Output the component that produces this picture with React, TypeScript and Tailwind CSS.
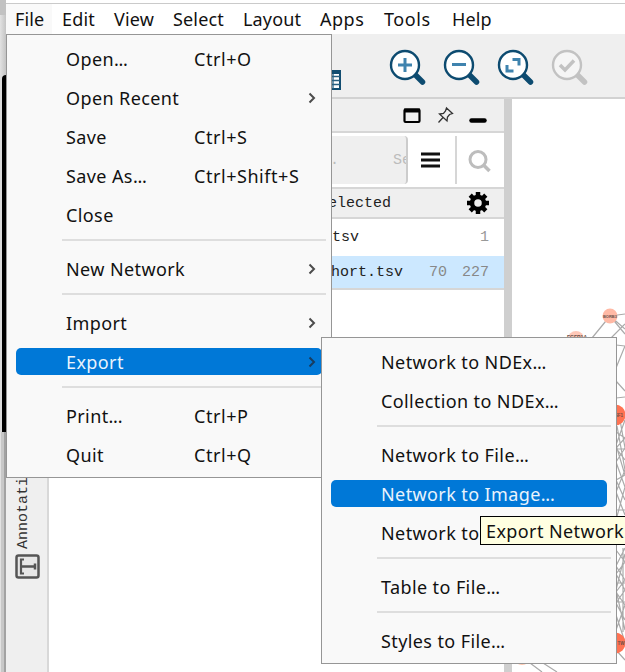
import React from 'react';

type Entry = { label?: string; dots?: boolean; keys?: string; arrow?: boolean; active?: boolean };

const fileMenu: Entry[] = [
  { label: 'Open', dots: true, keys: 'Ctrl+O' },
  { label: 'Open Recent', arrow: true },
  { label: 'Save', keys: 'Ctrl+S' },
  { label: 'Save As', dots: true, keys: 'Ctrl+Shift+S' },
  { label: 'Close' },
  {},
  { label: 'New Network', arrow: true },
  {},
  { label: 'Import', arrow: true },
  { label: 'Export', arrow: true, active: true },
  {},
  { label: 'Print', dots: true, keys: 'Ctrl+P' },
  { label: 'Quit', keys: 'Ctrl+Q' },
];

const exportMenu: Entry[] = [
  { label: 'Network to NDEx', dots: true },
  { label: 'Collection to NDEx', dots: true },
  {},
  { label: 'Network to File', dots: true },
  { label: 'Network to Image', dots: true, active: true },
  { label: 'Network to' },
  {},
  { label: 'Table to File', dots: true },
  {},
  { label: 'Styles to File', dots: true },
];

function MenuList({ items }: { items: Entry[] }) {
  return (
    <>
      {items.map((it, i) =>
        !it.label ? (
          <div key={i} className="h-[15px] pl-[55px] pr-[5px] pt-[5px]">
            <div className="h-[2px] bg-[#dedede]" />
          </div>
        ) : (
          <div key={i} className="flex h-[39px] items-center pl-[9px] pr-[9px]">
            <div className={`flex h-[27px] w-full items-center rounded-[5px] pl-[50px] tracking-[0.4px] ${it.active ? 'bg-[#0078d7] text-[#e9f3fc]' : ''}`}>
              <span className={it.keys ? 'w-32 shrink-0' : 'grow'}>
                {it.label}
                {it.dots && <span className="tracking-[-0.3px]">...</span>}
              </span>
              {it.keys && <span className="tracking-[0.55px]">{it.keys}</span>}
              {it.arrow && (
                <svg width="8" height="12" viewBox="0 0 8 12" className="mr-[6px]" fill="none" stroke={it.active ? '#173d60' : '#4c4c4c'} strokeWidth="2">
                  <path d="M1.5 1.5L6 6L1.5 10.5" />
                </svg>
              )}
            </div>
          </div>
        ),
      )}
    </>
  );
}

function Lens({ color, mark, children }: { color: string; mark: string; children: React.ReactNode }) {
  return (
    <svg width="38" height="38" viewBox="0 0 38 38" fill="none">
      <path d="M26 25.5L33.500 33" stroke={color} strokeWidth="5.5" strokeLinecap="round" />
      <circle cx="16" cy="16" r="14" fill={mark === '#c2c2c2' ? '#f5f5f5' : '#fff'} stroke={color} strokeWidth="2.4" />
      <g stroke={mark} strokeWidth="3">{children}</g>
    </svg>
  );
}

function Network() {
  return (
    <svg width="113" height="573" viewBox="512 99 113 573" fill="none" className="block">
      <g stroke="#aaa" strokeWidth="1.2">
        <path d="M610 316L592 338M610 316L625 334M610 316L625 329M610 316L625 314M625 324L611 338M616 345L625 346M616 368L625 346M616 381L625 391M616 398L625 397M616 449H625M616 510H625" />
        <path d="M617 426L625 470L616 492L625 515M620 420L625 448L616 462L625 487L616 520M616 432L625 438L616 448L625 460M625 420L616 445L625 475L616 480L625 500M616 550L625 562L616 574L625 590L616 603L625 620M625 548L616 566L625 580L616 592L625 605L616 630M625 554L616 590L625 630M616 556V620M623 548V632M616 583H625M616 602H625M616 615L625 642M530 663L542 672M543 663L557 672M616 650L625 660" />
      </g>
      <circle cx="610" cy="316" r="7.5" fill="#ffb9a5" />
      <circle cx="576" cy="339" r="8" fill="#ffc8b8" />
      <circle cx="615" cy="415" r="10.5" fill="#ff7353" />
      <circle cx="615" cy="643" r="10.5" fill="#ff7353" />
      <circle cx="522" cy="657" r="8" fill="#ffc8b0" />
      <g fill="#694f49" fontFamily="Liberation Sans, sans-serif" fontWeight="bold" fontSize="4.5" textAnchor="middle">
        <text x="610" y="317.5" fontSize="4">BORB3</text>
        <text x="577" y="339" fontSize="5">FGFR1A</text>
        <text x="619" y="417">SF1</text>
        <text x="621" y="645">TW</text>
      </g>
    </svg>
  );
}

export default function App() {
  return (
    <div className="relative flex h-[672px] w-[625px] overflow-hidden bg-white font-['Noto_Sans',sans-serif] text-[18px] leading-none text-[#111]">
      {/* Edge of the window behind */}
      <div className="flex w-[6px] shrink-0 flex-col bg-[#dcdcdc]">
        <div className="h-[15px] bg-[#c2c2c2]" />
        <div className="h-[60px] bg-gradient-to-r from-[#e2e2e2] to-[#c4c4c4]" />
        <div className="ml-[2px] h-[357px] rounded-tl-[4px] bg-black" />
        <div className="flex grow">
          <div className="w-[4px] border-l border-[#e2e2e2] bg-[#c8c8c8]" />
          <div className="w-[2px] bg-[#a2a2a2]" />
        </div>
      </div>

      <div className="flex grow flex-col">
        <nav className="mt-[3px] flex h-[31px] items-center border-t border-[#cacaca] tracking-[0.15px]">
          <span className="flex h-full w-[46px] items-center bg-[#f9f9f9] pl-[9px]">File</span>
          <span className="w-[52px] pl-[10px]">Edit</span>
          <span className="w-[59px] pl-[10px]">View</span>
          <span className="w-[70px] pl-[10px]">Select</span>
          <span className="w-[76px] pl-[10px]">Layout</span>
          <span className="w-[65px] pl-[11px] tracking-[0.5px]">Apps</span>
          <span className="w-[68px] pl-[10px] tracking-[0.6px]">Tools</span>
          <span className="pl-[10px]">Help</span>
        </nav>

        <div className="flex h-[65px] items-start border-b-2 border-[#d2d2d2] bg-[#efefef] pl-[325px]">
          <svg width="10" height="22" viewBox="0 0 10 22" className="mt-[35px]">
            <path d="M0 2H9V20H0" fill="#fff" stroke="#124d70" strokeWidth="2" />
            <path d="M2 2V20M0 7.5H9M0 11.5H9M0 15.5H9" stroke="#286080" strokeWidth="1.3" />
            <path d="M0 3H9" stroke="#124d70" strokeWidth="4" />
          </svg>
          <div className="ml-[48px] mt-[15px] flex gap-4">
            <Lens color="#0d4b70" mark="#3f83ae"><path d="M9 16H23M16 9V23" /></Lens>
            <Lens color="#0d4b70" mark="#3f83ae"><path d="M9 15.500H23" /></Lens>
            <Lens color="#0d4b70" mark="#3f83ae"><path d="M15.500 10.5H22V16.500M10 16V22H16.500" /></Lens>
            <Lens color="#c2c2c2" mark="#c2c2c2"><path d="M9 16L14 21L23 11.5" strokeWidth="3.5" /></Lens>
          </div>
        </div>

        <div className="flex grow">
          <aside className="flex w-[43px] flex-col items-center border-r-2 border-[#d8d8d8] bg-[#efefef] pt-[368px]">
            <div className="flex h-[82px] items-center font-['Liberation_Mono',monospace] text-[15px] text-[#333] [writing-mode:vertical-rl] rotate-180"><span className="mr-[-6px]">Annotation</span></div>
            <svg width="25" height="25" viewBox="0 0 25 25" fill="none" stroke="#555" className="mt-[5px] ml-[1px]">
              <rect x="1.5" y="1.5" width="22" height="22" rx="2" fill="#e7e7e7" strokeWidth="2.5" />
              <path d="M6 4.500V20.500M5 5.500H9M5 19.500H9" strokeWidth="2.2" />
              <path d="M6 12.500H20M20 9.500V15.500" strokeWidth="2.5" />
            </svg>
          </aside>

          <section className="flex w-[455px] flex-col">
            <div className="flex h-[34px] items-center border-b-2 border-[#d6d6d6] bg-[#efefef] pl-[354px]">
              <svg width="84" height="18" viewBox="403 106 84 18" fill="none" stroke="#000">
                <rect x="404.500" y="109.500" width="15" height="12.500" rx="1" strokeWidth="2.200" />
                <path d="M404 110.500H420" strokeWidth="4" />
                <path d="M446.500 108L452.500 113.500L449.500 114.500L447.500 117L447 121L439.500 114L443.500 113.500L445.500 111ZM443 117.500L438.500 122.500" stroke="#333" strokeWidth="1.300" />
                <path d="M471.500 120.500H484.500" strokeWidth="4.500" strokeLinecap="round" />
              </svg>
            </div>
            <div className="flex h-[56px] items-center border-b-2 border-[#d6d6d6]">
              <div className="flex h-[48px] w-[359px] items-center justify-end overflow-hidden rounded-r border-r-2 border-[#ccc] bg-[#efefef] font-['Liberation_Mono',monospace] text-[15px] text-[#bcbcbc]">
                <span className="mr-[54px]">.</span>
                <span className="w-[13px] overflow-hidden">Se</span>
              </div>
              <svg width="19" height="16" className="ml-[13px]" stroke="#111" strokeWidth="3"><path d="M0 2H19M0 8H19M0 14H19" /></svg>
              <div className="ml-[15px] h-[48px] w-[2px] bg-[#d6d6d6]" />
              <svg width="24" height="24" viewBox="0 0 24 24" className="ml-[11px] mt-[2px]" fill="none" stroke="#bdbdbd" strokeWidth="3">
                <circle cx="10" cy="10.500" r="8" /><path d="M15.500 16L21.500 22" strokeWidth="3.500" />
              </svg>
            </div>
            <div className="flex h-[30px] items-center border-b-2 border-[#d6d6d6] bg-[#efefef] pl-[270px] font-['Liberation_Mono',monospace] text-[15px] text-[#222]">
              <span className="w-[147px]">selected</span>
              <svg width="24" height="24" viewBox="-12 -12 24 24" fill="none" stroke="#000">
                <circle r="6" strokeWidth="4.500" />
                <path d="M0-11V-6M0 6V11M-11 0H-6M6 0H11M-7.800-7.800L-4.500-4.500M4.500 4.500L7.800 7.800M7.800-7.800L4.500-4.500M-4.500 4.500L-7.800 7.800" strokeWidth="4.500" />
              </svg>
            </div>
            <div className="flex h-[37px] items-center justify-between pl-[283px] pr-[15px] font-['Liberation_Mono',monospace] text-[15px] text-[#222]">
              <span>tsv</span><span className="text-[#999]">1</span>
            </div>
            <div className="flex h-[34px] items-center border-b-2 border-[#d6d6d6] bg-[#cce8ff] pl-[273px] font-['Liberation_Mono',monospace] text-[15px] text-[#222]">
              <span className="w-[107px] pl-[9px]">hort.tsv</span>
              <span className="w-[33px] text-[#888]">70</span><span className="text-[#888]">227</span>
            </div>
          </section>
          <div className="w-[8px] bg-[#cfcfcf]" />
          <Network />
        </div>
      </div>

      <div className="absolute left-[6px] top-[34px] h-[444px] w-[326px] border border-[#969696] bg-[#f9f9f9] pt-[4px]">
        <MenuList items={fileMenu} />
      </div>

      <div className="absolute left-[321px] top-[337px] h-[327px] w-[296px] border border-[#969696] bg-[#f9f9f9] pt-[4px]">
        <MenuList items={exportMenu} />
      </div>

      <div className="absolute left-[480px] top-[516px] flex h-[29px] w-[150px] items-center border border-black bg-[#ffffe1] pl-[5px] tracking-[0.4px] whitespace-nowrap">Export Network</div>
    </div>
  );
}
